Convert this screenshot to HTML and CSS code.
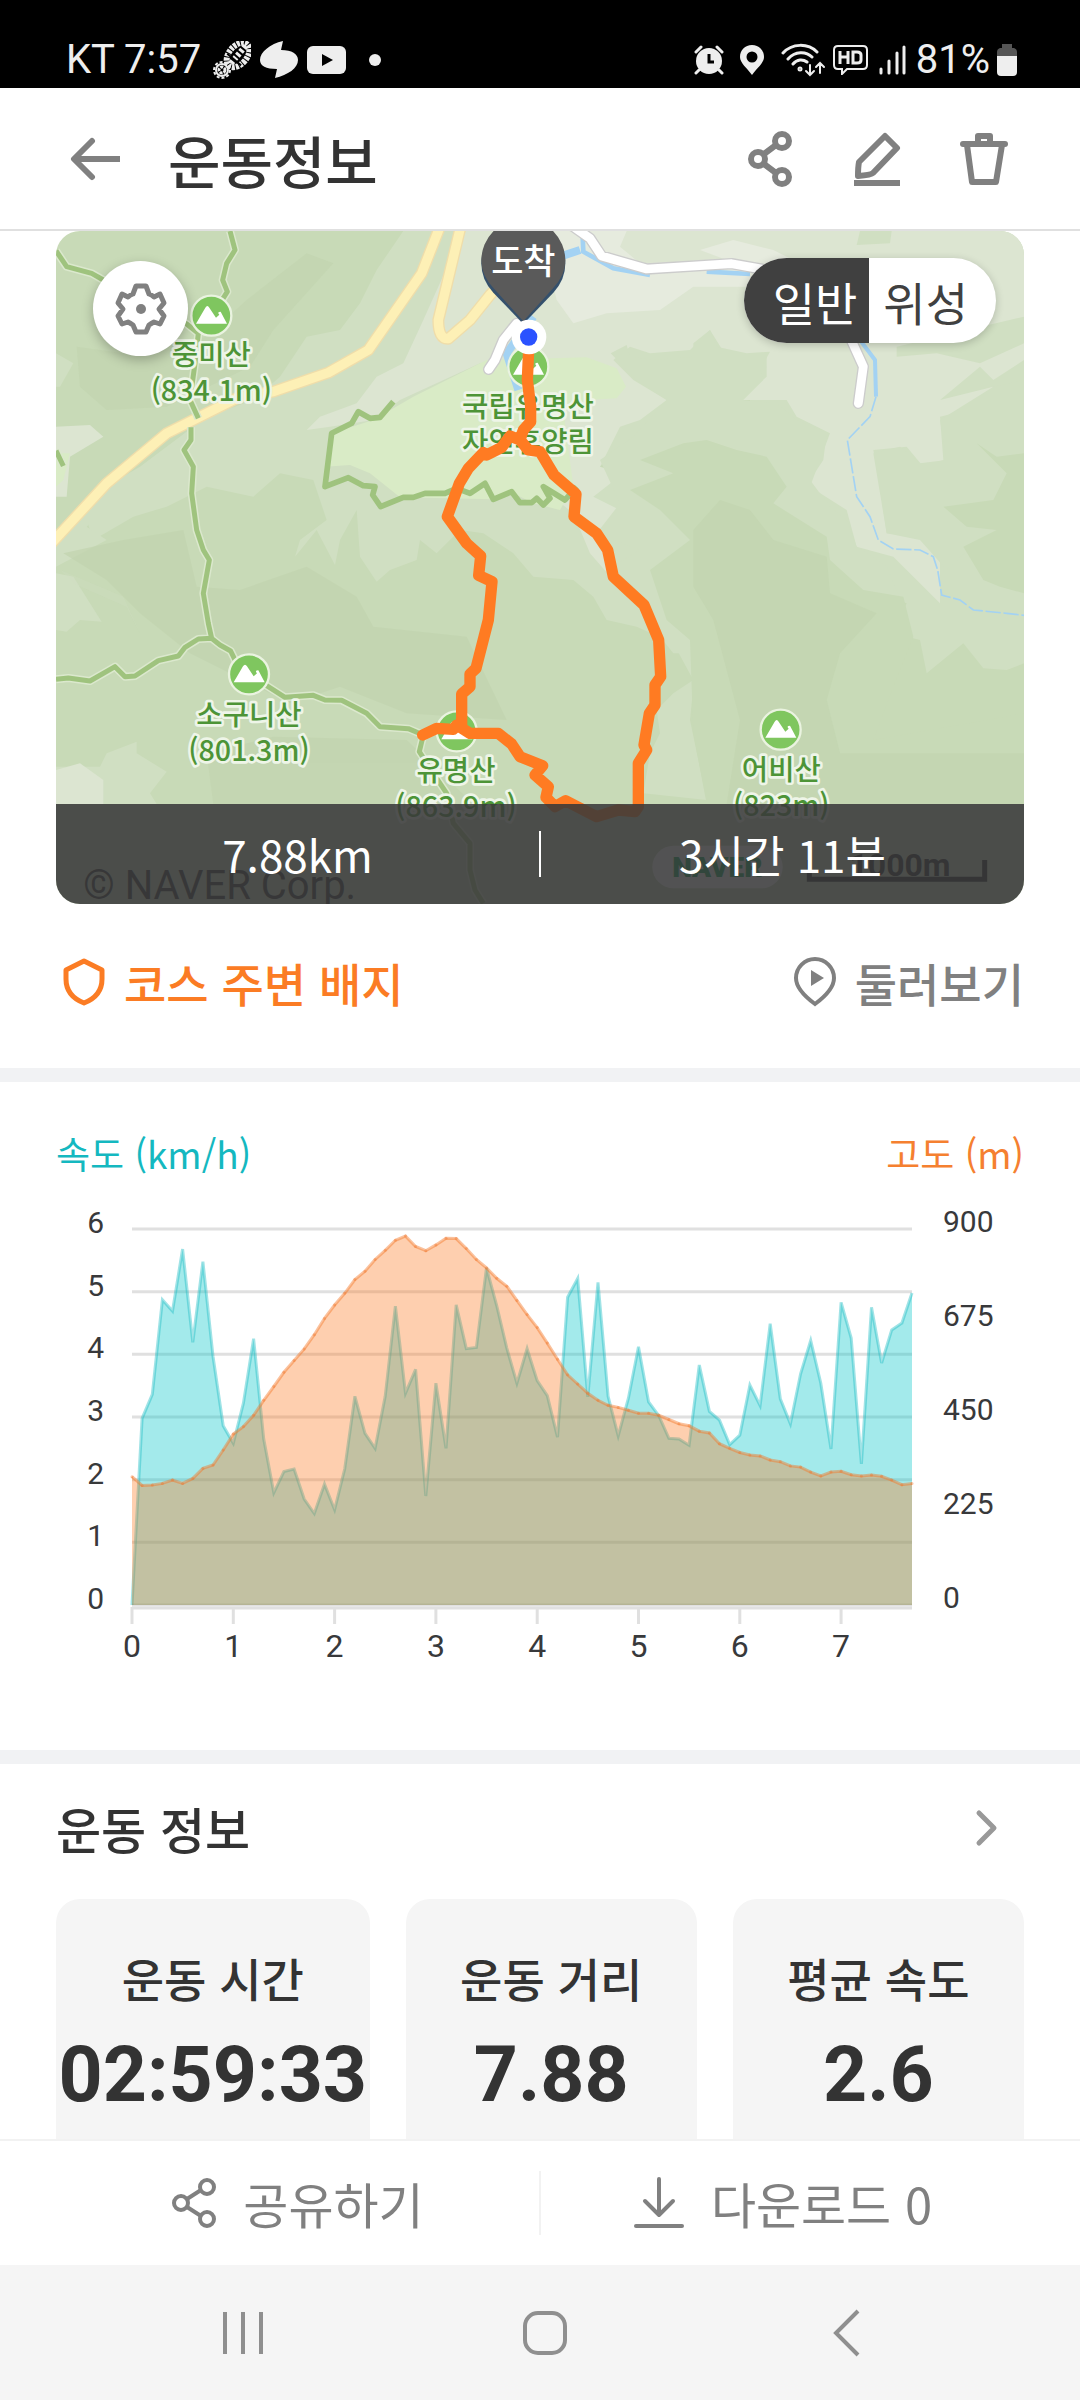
FILE: index.html
```html
<!doctype html>
<html lang="ko">
<head>
	<meta charset="UTF-8" />
	<meta name="viewport" content="width=device-width, initial-scale=1" />
	<title>운동정보</title>
	<link rel="stylesheet" href="styles.css">
</head>
<body>
<div class="app">
	<div class="status">
		<span>KT 7:57</span>
		<svg class="shoe" width="38" height="38" viewBox="0 0 38 38">
			<g transform="rotate(40 25 14)" fill="none" stroke="#eee">
				<ellipse cx="25" cy="14" rx="9" ry="14" stroke-width="6" stroke-dasharray="3 1"/>
				<path d="M25 2V26" stroke-width="6" stroke-dasharray="3 2"/>
				<path d="M16 20H34" stroke="#000" stroke-width="2"/>
			</g>
			<circle cx="9" cy="29" r="6" fill="none" stroke="#eee" stroke-width="2"/>
			<circle cx="9" cy="29" r="8" fill="none" stroke="#eee" stroke-width="2" stroke-dasharray="3 2"/>
			<circle cx="9" cy="29" r="3" fill="none" stroke="#eee" stroke-width="3" stroke-dasharray="3 1"/>
		</svg>
		<svg width="40" height="38" viewBox="0 0 40 38"><path d="M24 0 L22 9 C33 9 39 13 39 19 C39 27 29 34 16 37 L18 28 C7 28 1 25 1 19 C1 11 11 3 24 0Z" fill="#eee"/></svg>
		<svg width="40" height="30" viewBox="0 0 40 30"><rect x="0" y="1" width="39" height="28" rx="6" fill="#eee"/><path d="M15 9 26 15 15 21Z" fill="#000"/></svg>
		<i class="dot"></i>
		<div class="status-right">
			<svg width="40" height="30" viewBox="0 0 40 30">
				<circle cx="16" cy="16" r="13" fill="#eee"/>
				<path d="M3 7 8 2M29 7 24 2M6 25 3 28M26 25 29 28" stroke="#eee" stroke-width="3" stroke-linecap="round"/>
				<path d="M16 9V17H21" fill="none" stroke="#000" stroke-width="3"/>
			</svg>
			<svg width="36" height="30" viewBox="0 0 36 30"><path fill-rule="evenodd" d="M13 0C20 0 25 5 25 12C25 18 18 23 13 30C8 23 1 18 1 12C1 5 6 0 13 0ZM13 6.500a5.500 5.500 0 1 0 0 11a5.500 5.500 0 1 0 0-11Z" fill="#eee"/></svg>
			<svg width="46" height="34" viewBox="0 0 46 34" fill="none" stroke="#eee" stroke-width="3" stroke-linecap="round">
				<path d="M2 10C11 0 27 0 36 9M7 16C14 8 25 8 31 14M12 21C16 16 22 16 26 19"/>
				<circle cx="19" cy="26" r="1"/>
				<path d="M29 22V32M25 28 29 32 33 28M39 30V20M35 24 39 20 43 24" stroke-width="2"/>
			</svg>
			<svg width="39" height="30" viewBox="0 0 39 30"><path d="M5 1H30Q34 1 34 5V20Q34 24 30 24H14L9 29V24H5Q1 24 1 20V5Q1 1 5 1Z" fill="none" stroke="#eee" stroke-width="2"/><path d="M7 6V19M15 6V19M7 12H15M20 7V18H24Q28 18 28 15V10Q28 7 24 7Z" fill="none" stroke="#eee" stroke-width="3"/></svg>
			<svg width="32" height="30" viewBox="0 0 32 30"><path d="M3 24V28M11 16V28M19 8V28M26 2V28" stroke="#eee" stroke-width="3" stroke-linecap="round"/></svg>
			<span>81%</span>
			<svg width="22" height="32" viewBox="0 0 22 32"><path d="M6 0H16V4H18Q21 5 21 8V14H1V8Q1 5 4 4H6Z" fill="#555"/><path d="M1 12H21V28Q21 32 17 32H5Q1 32 1 28Z" fill="#eee"/></svg>
		</div>
	</div>

	<header class="header">
		<button class="icon-btn" aria-label="뒤로"><svg width="52" height="44" viewBox="0 0 52 44" fill="none" stroke="#808080" stroke-width="6" stroke-linecap="round" stroke-linejoin="round"><path d="M22 4 4 22 22 40"/><path d="M6 22H50" stroke-linecap="butt"/></svg></button>
		<h1>운동정보</h1>
		<div class="tools">
			<button class="icon-btn" aria-label="공유"><svg width="46" height="58" viewBox="0 0 46 58" fill="none" stroke="#808080" stroke-width="6"><circle cx="35" cy="11" r="7"/><circle cx="11" cy="29" r="7"/><circle cx="35" cy="47" r="7"/><path d="M17 24 29 15M17 34 29 43"/></svg></button>
			<button class="icon-btn" aria-label="편집"><svg width="48" height="56" viewBox="0 0 48 56" fill="none" stroke="#808080" stroke-width="6" stroke-linejoin="round"><path d="M32 5 44 17 20 42 Q18 44 5 45 Q5 36 6 31Z"/><path d="M1 52H47"/></svg></button>
			<button class="icon-btn" aria-label="삭제"><svg width="50" height="56" viewBox="0 0 50 56" fill="none" stroke="#808080" stroke-width="6" stroke-linejoin="round"><path d="M4 13H46" stroke-linecap="round"/><path d="M19 12V5H31V12M8 14 13 51H37L43 14"/></svg></button>
		</div>
	</header>

	<main class="content">
		<section class="map">
			<svg class="map-pic" viewBox="48 33 2904 2019">
				<rect x="48" y="33" width="2904" height="2019" fill="#c8dab7"/>
				<!-- 지형 -->
				<g fill="#d0dfc2">
					<path d="M1000 33 1090 33 1010 150 960 250 900 330 800 350 720 470 640 540 500 590 300 740 180 810 140 900 160 960 280 890 380 860 500 800 640 830 720 760 820 780 860 900 780 960 765 1010 830 930 885 1035 900 960 950 870 960 1010 1010 1085 1050 1050 1130 1020 1140 960 1190 1000 1260 930 1330 940 1420 1000 1480 1070 1600 1080 1660 1130 1700 1200 1790 1220 1900 1270 1960 1380 1900 1420 1850 1470 1860 1540 1830 1600 1810 1720 2000 1740 1950 1500 1980 1200 1850 1050 1900 880 1650 760 2700 33Z"/>
					<path d="M48 1060 100 1070 150 1150 185 1205 120 1200 80 1235 48 1230Z"/>
					<path d="M48 940 90 900 180 830 200 860 140 920 200 960 48 1040Z"/>
					<path d="M48 1640 180 1640 200 1600 290 1565 290 1600 380 1655 330 1720 350 1752 48 1752Z"/>
					<path d="M60 1050 250 1130 300 1240 260 1160 100 1090Z" opacity=".3"/>
					<path d="M48 400 100 430 60 500 48 500Z"/>
					<path d="M2100 400 2952 300 2952 1330 2900 1350 2830 1345 2770 1270 2660 1360 2640 1260 2560 1240 2600 1150 2470 1110 2360 1020 2300 920 2200 880Z"/>
				</g>
				<g fill="#dce5d1">
					<path d="M1270 33 2952 33 2952 420 2860 480 2820 440 2700 540 2860 500 2820 560 2700 590 2710 720 2650 740 2600 680 2500 690 2520 800 2540 940 2700 950 2700 1150 2560 1010 2450 980 2420 870 2310 800 2370 640 2270 590 2240 540 2100 540 2180 470 2180 400 2060 410 2010 330 1950 390 1830 400 1770 380 1720 420 1780 480 1880 540 1800 600 1740 620 1680 740 1750 760 1660 830 1740 870 1690 950 1720 1080 1650 1000 1600 880 1550 840 1480 700 1420 600 1320 430 1080 540 1000 600 870 620 800 630 840 590 950 550 1010 470 1090 430 1150 300Z"/>
					<path d="M48 620 150 615 190 650 90 710 80 830 48 830Z"/>
					<path d="M48 1650 120 1630 190 1680 190 1752 48 1752Z"/>
				</g>
				<g fill="#e6ebde">
					<path d="M1500 33 1760 33 1740 80 1800 130 2080 120 2160 150 2150 200 1960 200 1860 270 1700 280 1600 310 1550 240Z"/>
					<path d="M1980 90 2080 60 2200 90 2280 130 2170 150 2060 120Z"/>
				</g>
				<g fill="#d0dfc2">
					<path d="M1712 400 1760 375 1770 410 1840 420 1960 410 1960 370 2010 330 2030 380 2120 400 2190 395 2160 450 2170 480 2110 540 2210 550 2270 600 2360 640 2350 720 2310 780 2370 860 2420 900 2450 980 2540 1040 2600 1180 2560 1300 1900 1300 1700 1050 1800 990 1670 940 1740 850 1680 720 1780 650 1880 540 1790 480Z"/>
					<path d="M2450 75 2550 70 2555 33 2460 33Z"/>
					<path d="M2570 380 2952 290 2952 370 2820 430 2690 400 2570 410Z"/>
					<path d="M2500 700 2580 680 2640 730 2720 720 2700 600 2860 500 2952 480 2952 860 2900 880 2720 1050 2640 960 2540 940Z"/>
				</g>
				<g fill="#c8dab7">
					<path d="M1800 720 1930 670 2000 660 2090 690 2180 710 2240 800 2200 850 2360 950 2370 1020 2470 1110 2590 1130 2620 1250 2560 1400 2500 1560 2952 1480 2952 1752 2000 1752 1960 1540 1950 1260 1880 1200 1830 1050 1950 960 1860 870 1770 810 1900 760Z"/>
					<path d="M2810 670 2870 710 2952 700 2952 1120 2880 1100 2830 1080 2770 980 2870 930 2780 920 2710 860 2860 840 2900 760Z"/>
				</g>
				<g fill="#c2d4af" opacity=".7">
					<path d="M1960 930 2040 840 2130 870 2200 960 2360 1010 2370 1120 2510 1180 2400 1300 2360 1440 2400 1600 2952 1600 2952 1752 2060 1752 2100 1500 2020 1200 1960 1100Z"/>
					<path d="M110 380 250 400 500 350 620 240 800 100 880 130 700 330 630 440 380 560 200 570 120 500Z"/>
					<path d="M70 1000 250 960 430 930 470 1100 600 1110 800 1040 950 1130 1000 1220 1280 1250 1400 1500 1100 1480 900 1400 750 1450 450 1300 300 1180 200 1080Z"/>
					<path d="M500 1600 700 1550 1100 1560 1300 1752 520 1752Z"/>
				</g>
				<path d="M875 640 1000 600 1120 530 1340 420 1640 412 1730 445 1758 500 1730 535 1640 540 1570 570 1600 800 1560 870 1480 850 1420 820 1360 838 1080 832 990 760 930 735 855 740Z" fill="#d9ebc6"/>
				<path d="M48 700 90 700 70 780 48 800Z" fill="#d9ebc6"/>
				<!-- 물길 -->
				<g fill="none" stroke="#a3d2f3">
					<path d="M1480 290 1400 400 1435 510M1560 110 1620 90" stroke-width="24"/>
					<path d="M1628 50 1630 95 1720 145 1830 165M2000 155 2130 162" stroke-width="14"/>
					<path d="M2460 360 2505 420 2508 530" stroke-width="12"/>
					<path d="M2508 530 2490 590 2422 660 2450 830 2490 890 2515 960 2560 987 2640 990 2680 1010 2693 1050 2705 1125 2760 1140 2800 1170 2900 1180 2952 1186" stroke-width="5" stroke-dasharray="46 8"/>
				</g>
				<!-- 도로 -->
				<g fill="none" stroke-linejoin="round" stroke-linecap="round">
					<path d="M30 975 200 790 380 640 480 590 600 530 700 515 865 458 985 390 1145 160 1200 20M1262 20 1195 300Q1195 358 1225 356L1290 300 1350 225 1440 130" stroke="#efddaa" stroke-width="36"/>
					<path d="M30 975 200 790 380 640 480 590 600 530 700 515 865 458 985 390 1145 160 1200 20M1262 20 1195 300Q1195 358 1225 356L1290 300 1350 225 1440 130" stroke="#fdf0b6" stroke-width="28"/>
					<path d="M1430 310 1390 360 1365 420 1346 448M1600 20 1650 55 1685 108 1820 147 2075 131 2180 150 2320 210 2420 330 2470 440 2455 550" stroke="#ccc" stroke-width="34"/>
					<path d="M1430 310 1390 360 1365 420 1346 448M1600 20 1650 55 1685 108 1820 147 2075 131 2180 150 2320 210 2420 330 2470 440 2455 550" stroke="#fff" stroke-width="26"/>
				</g>
				<!-- 등산로 -->
				<g fill="none" stroke-linejoin="round">
					<path d="M48 92 80 140 155 160 190 180 440 312 475 340 465 430 450 540 475 595M453 622 453 660 432 690 460 740 455 820 470 930 490 990 508 1020 490 1120 505 1210 515 1255M570 33 585 90 560 130 548 180 562 215 540 250M48 692 70 738M48 1378 85 1374 150 1383 225 1340 255 1370 285 1368 355 1322 415 1308 435 1282 475 1257 515 1255 540 1275 572 1293 590 1330 627 1363 735 1432 820 1426 855 1440 905 1441 980 1480 1020 1520 1105 1526 1150 1545 1138 1595 1180 1660 1220 1720 1240 1810 1290 1870 1290 1950 1305 2010 1330 2050" stroke="#dbe8cd" stroke-width="24"/>
					<path d="M48 92 80 140 155 160 190 180 440 312 475 340 465 430 450 540 475 595M453 622 453 660 432 690 460 740 455 820 470 930 490 990 508 1020 490 1120 505 1210 515 1255M570 33 585 90 560 130 548 180 562 215 540 250M48 692 70 738M48 1378 85 1374 150 1383 225 1340 255 1370 285 1368 355 1322 415 1308 435 1282 475 1257 515 1255 540 1275 572 1293 590 1330 627 1363 735 1432 820 1426 855 1440 905 1441 980 1480 1020 1520 1105 1526 1150 1545 1138 1595 1180 1660 1220 1720 1240 1810 1290 1870 1290 1950 1305 2010 1330 2050" stroke="#9fc37e" stroke-width="15"/>
					<path d="M1060 545 1020 592 990 595 955 575 935 610 875 640 855 800 925 773 970 797 1005 800 998 825 1022 860 1090 832 1120 832 1155 820 1215 820 1250 805 1290 820 1335 790 1360 838 1415 815 1440 848 1475 848 1490 835 1510 855 1530 835 1510 800 1575 840 1610 800" stroke="#9fc37e" stroke-width="17"/>
				</g>
				<!-- 산 표시 -->
				<defs>
					<g id="peak">
						<circle r="60" fill="#7fc65f" stroke="#eaf3e0" stroke-width="7"/>
						<path d="M-46 24-18-24Q-12-34-6-24L14 6 24-3Q16-12 28-12L47 24Z" fill="#fff"/>
					</g>
				</defs>
				<use href="#peak" x="514" y="287"/>
				<use href="#peak" x="1465" y="440"/>
				<use href="#peak" x="627" y="1363"/>
				<use href="#peak" x="1250" y="1534"/>
				<use href="#peak" x="2222" y="1529"/>
				<g class="peak-name">
					<text x="514" y="436">중미산</text>
					<text x="514" y="543">(834.1m)</text>
					<text x="1464" y="590">국립유명산</text>
					<text x="1464" y="697">자연휴양림</text>
					<text x="627" y="1515">소구니산</text>
					<text x="627" y="1623">(801.3m)</text>
					<text x="1248" y="1684">유명산</text>
					<text x="1248" y="1792">(863.9m)</text>
					<text x="2224" y="1680">어비산</text>
					<text x="2224" y="1788">(823m)</text>
				</g>
				<text class="copyright" x="130" y="2038">© NAVER Corp.</text>
				<rect x="1837" y="1877" width="391" height="128" rx="64" fill="#fff"/>
				<text class="naver" x="2032" y="1970">NAVER</text>
				<text class="scale-text" x="2580" y="1968">1000m</text>
				<path d="M2308 1920V1978H2834V1920" fill="none" stroke="#222" stroke-width="15"/>
				<!-- 이동 경로 -->
				<path d="M1466 390 1462 480 1472 560 1472 605 1450 630 1440 660 1410 648 1385 682 1340 705 1330 698 1285 745 1258 790 1222 890 1280 970 1322 1008 1316 1066 1356 1085 1345 1200 1308 1345 1290 1362 1290 1400 1265 1422 1265 1515M1148 1545 1190 1525 1240 1528 1250 1515 1290 1540 1375 1540 1415 1572 1440 1610 1508 1637 1485 1665 1525 1700 1518 1732 1545 1760 1577 1742 1670 1790 1735 1770 1785 1775 1795 1760 1795 1630 1820 1590 1812 1575 1828 1480 1845 1455 1845 1395 1862 1370 1856 1260 1812 1155 1720 1070 1703 990 1670 940 1602 890 1608 822 1542 765 1500 695 1465 690 1440 660" fill="none" stroke="#ff7b22" stroke-width="34" stroke-linecap="round" stroke-linejoin="round"/>
				<!-- 도착 핀 -->
				<path d="M1450 312 1360 218Q1324 180 1324 130A126 126 0 0 1 1576 130Q1576 180 1540 218Z" fill="#34506c"/>
				<path d="M1450 304 1362 206Q1324 166 1324 122A126 126 0 0 1 1576 122Q1576 166 1538 206Z" fill="#5a5a5a"/>
				<text class="pin-text" x="1450" y="163">도착</text>
				<circle cx="1467" cy="351" r="52" fill="#fff"/>
				<circle cx="1466" cy="351" r="26" fill="#2b52ff"/>
			</svg>
			<button class="gear" aria-label="지도 설정"><svg width="52" height="54" viewBox="-26 -27 52 54"><path d="M-8-15 -5-23H5L8-15Q11-14 13-12L19-15 23-6 18 0 23 7 19 15 13 13Q11 14 8 16L5 23H-5L-8 16Q-11 14-13 13L-19 15-23 7-18 0-23-6-19-15-13-12Q-11-14-8-15Z" fill="none" stroke="#808080" stroke-width="5" stroke-linejoin="round"/><circle r="5" fill="#808080"/></svg></button>
			<div class="map-type">
				<button class="on" aria-pressed="true">일반</button>
				<button aria-pressed="false">위성</button>
			</div>
			<div class="summary">
				<span>7.88km</span>
				<span>3시간 11분</span>
			</div>
		</section>

		<section class="links">
			<a href="#" class="badge"><svg width="44" height="50" viewBox="0 0 44 50"><path d="M22 4 40 13V22Q40 39 22 46Q4 39 4 22V13Z" fill="none" stroke="#fb7c24" stroke-width="5" stroke-linejoin="round"/></svg>코스 주변 배지</a>
			<a href="#" class="look"><svg width="44" height="50" viewBox="0 0 44 50"><path d="M22 47Q3 33 3 21A19 19 0 0 1 41 21Q41 33 22 47Z" fill="none" stroke="#808080" stroke-width="4"/><path d="M18 13 31 21 18 29Z" fill="#808080"/></svg>둘러보기</a>
		</section>

		<section class="graph">
			<div class="legend"><span class="speed">속도 (km/h)</span><span class="height">고도 (m)</span></div>
			<svg id="chart" viewBox="0 0 968 470"></svg>
		</section>

		<section class="info">
			<a href="#" class="info-title"><h2>운동 정보</h2><svg width="24" height="38" viewBox="0 0 24 38"><path d="M4 4 19 19 4 34" fill="none" stroke="#999" stroke-width="5" stroke-linecap="round" stroke-linejoin="round"/></svg></a>
			<ul class="cards">
				<li><p>운동 시간</p><strong>02:59:33</strong></li>
				<li><p>운동 거리</p><strong>7.88</strong></li>
				<li><p>평균 속도</p><strong>2.6</strong></li>
			</ul>
		</section>
	</main>

	<div class="actions">
		<button><svg width="46" height="52" viewBox="0 0 46 52" fill="none" stroke="#808080" stroke-width="4"><circle cx="36" cy="10" r="7"/><circle cx="10" cy="26" r="7"/><circle cx="36" cy="42" r="7"/><path d="M16 22 30 13M16 30 30 39"/></svg>공유하기</button>
		<button><svg width="52" height="54" viewBox="0 0 52 54" fill="none" stroke="#808080" stroke-width="4" stroke-linecap="round" stroke-linejoin="round"><path d="M26 3V39M12 25 26 39 40 25"/><path d="M3 50H49"/></svg>다운로드 0</button>
	</div>

	<nav class="navbar">
		<button aria-label="최근 앱"><svg width="48" height="48" viewBox="0 0 48 48"><path d="M6 3V45M24 3V45M42 3V45" stroke="#8f8f8f" stroke-width="4"/></svg></button>
		<button aria-label="홈"><svg width="48" height="48" viewBox="0 0 48 48"><rect x="4" y="4" width="40" height="40" rx="13" fill="none" stroke="#8f8f8f" stroke-width="4"/></svg></button>
		<button aria-label="이전"><svg width="48" height="48" viewBox="0 0 48 48"><path d="M35 2 13 24 35 46" fill="none" stroke="#8f8f8f" stroke-width="4"/></svg></button>
	</nav>
</div>

<script>
	// 0.1km 마다 기록된 속도(km/h)
	let speed = [0, 2.98, 3.36, 4.87, 4.69, 5.68, 4.19, 5.48, 3.97, 2.86, 2.58, 3.22, 4.25, 2.65, 1.79, 2.13, 2.17, 1.69, 1.46, 1.93,
		1.52, 2.17, 3.33, 2.74, 2.5, 3.33, 4.77, 3.38, 3.76, 1.74, 3.54, 2.5, 4.79, 4.09, 4.11, 5.38, 4.78, 4.1, 3.54, 4.09,
		3.58, 3.34, 2.68, 4.91, 5.21, 3.32, 5.15, 3.33, 2.7, 3.3, 4.12, 3.24, 3.02, 2.66, 2.65, 2.55, 3.83, 3.09, 2.95, 2.56,
		2.71, 3.51, 3.18, 4.49, 3.29, 2.89, 3.69, 4.22, 3.54, 2.49, 4.83, 4.26, 2.25, 4.75, 3.86, 4.39, 4.5, 4.98];
	// 고도(m)
	let height = [307, 286, 287, 291, 299, 291, 303, 327, 335, 371, 409, 427, 454, 490, 523, 557, 585, 613, 647, 686,
		718, 746, 779, 799, 827, 849, 873, 883, 858, 848, 862, 878, 877, 853, 827, 807, 782, 763, 729, 695,
		664, 627, 588, 551, 529, 507, 490, 478, 473, 466, 459, 459, 454, 444, 434, 429, 416, 412, 386, 375,
		365, 359, 357, 347, 343, 333, 330, 318, 309, 318, 320, 312, 309, 311, 308, 299, 288, 291];

	let left = 76, right = 856, top0 = 29, bottom = 405;
	let step = (right - left) / (speed.length - 1);

	// 값 배열을 좌표로 바꾼다
	function points(list, max){
		return list.map((v, i) => [(left + i * step).toFixed(1), (bottom - v / max * (bottom - top0)).toFixed(1)]);
	}

	let html = '';
	for( let i = 0; i <= 6; i++ ){
		let y = bottom - i * (bottom - top0) / 6;
		html += `<path class="grid" d="M${left} ${y}H${right}"/>`;
		html += `<text class="y" x="48" y="${y + 4}" text-anchor="end">${i}</text>`;
	}
	for( let i = 0; i <= 4; i++ ){
		html += `<text class="y" x="887" y="${bottom + 3 - i * 94}">${i * 225}</text>`;
	}
	html += `<path class="grid" d="M${left} 408H${right}"/>`;
	for( let i = 0; i <= 7; i++ ){
		let x = left + i * step * 10;
		html += `<path class="grid" d="M${x} 407V424"/>`;
		html += `<text class="x" x="${x}" y="457">${i}</text>`;
	}

	[['speed', points(speed, 6)], ['height', points(height, 900)]].forEach(([name, list]) => {
		let line = list.map(p => p.join(' ')).join('L');
		html += `<path class="${name}-area" d="M${line}V${bottom}H${left}Z"/>`;
		html += `<path class="${name}-line" d="M${line}"/>`;
		if(name === 'height'){
			html += list.map(p => `<circle class="point" cx="${p[0]}" cy="${p[1]}" r="1.5"/>`).join('');
		}
	});

	document.querySelector('#chart').innerHTML = html;
</script>
</body>
</html>
```
FILE: styles.css
```css
*{
	box-sizing: border-box;
}
body,ul,h1,h2,p{
	margin: 0;
	padding: 0;
}
body{
	background: #fff;
	color: #333;
	font-family: "Noto Sans CJK KR", "Noto Sans", sans-serif;
}
button{
	padding: 0;
	border: 0;
	background: none;
	font: inherit;
	color: inherit;
}
a{
	color: inherit;
	text-decoration: none;
}
svg{
	display: block;
	flex: none;
}
.app{
	display: flex;
	flex-direction: column;
	height: 100vh;
}

/* 상태바 */
.status{
	display: flex;
	align-items: center;
	gap: 8px;
	flex: none;
	padding: 32px 62px 0 66px;
	height: 88px;
	background: #000;
	color: #eee;
	font-family: Roboto, sans-serif;
	font-size: 40px;
	line-height: 56px;
}
.shoe{
	margin-left: 4px;
}
.dot{
	width: 12px;
	height: 12px;
	margin-left: 14px;
	border-radius: 50%;
	background: #eee;
}
.status-right{
	display: flex;
	align-items: center;
	gap: 6px;
	margin-left: auto;
}

/* 헤더 */
.header{
	display: flex;
	align-items: center;
	flex: none;
	padding: 32px 56px;
	border-bottom: 2px solid #e0e0e0;
}
.header h1{
	margin-left: 32px;
	font-size: 57px;
	font-weight: 500;
	line-height: 76px;
}
.icon-btn{
	display: flex;
	align-items: center;
	justify-content: center;
	width: 80px;
	height: 77px;
}
.tools{
	display: flex;
	gap: 27px;
	margin-left: auto;
}

.content{
	flex: 1;
	min-height: 0;
	overflow: hidden;
}

/* 지도 */
.map{
	position: relative;
	margin: 0 56px;
	border-radius: 24px;
	overflow: hidden;
}
.map-pic{
	width: 100%;
}
.peak-name{
	font-size: 86px;
	font-weight: 500;
	text-anchor: middle;
	fill: #4d9437;
	stroke: #eef5e8;
	stroke-width: 16px;
	stroke-linejoin: round;
	paint-order: stroke;
}
.copyright{
	font-family: Roboto, sans-serif;
	font-size: 120px;
	fill: #333;
}
.naver{
	font-family: Roboto, sans-serif;
	font-size: 84px;
	font-weight: 900;
	text-anchor: middle;
	fill: #03a050;
}
.scale-text{
	font-family: Roboto, sans-serif;
	font-size: 96px;
	font-weight: 700;
	text-anchor: middle;
	fill: #222;
}
.pin-text{
	font-size: 105px;
	font-weight: 500;
	text-anchor: middle;
	fill: #fff;
}
.gear{
	position: absolute;
	left: 37px;
	top: 30px;
	display: flex;
	align-items: center;
	justify-content: center;
	width: 95px;
	height: 95px;
	border-radius: 50%;
	background: #fff;
	box-shadow: 0 4px 12px rgba(0,0,0,.25);
}
.map-type{
	position: absolute;
	right: 28px;
	top: 27px;
	display: flex;
	height: 85px;
	border-radius: 43px;
	background: #fff;
	box-shadow: 0 2px 8px rgba(0,0,0,.2);
	overflow: hidden;
}
.map-type button{
	padding: 0 28px 0 14px;
	color: #404040;
	font-size: 46px;
	line-height: 80px;
}
.map-type .on{
	padding: 0 12px 0 29px;
	background: #404040;
	color: #fff;
}
.summary{
	position: absolute;
	left: 0;
	right: 0;
	bottom: 0;
	display: flex;
	align-items: center;
	height: 100px;
	background: rgba(56,56,57,.87);
	color: #fff;
	font-size: 44px;
	line-height: 46px;
}
.summary span{
	flex: 1;
	text-align: center;
}
.summary span + span{
	border-left: 2px solid #fff;
}

.links{
	display: flex;
	align-items: center;
	justify-content: space-between;
	padding: 44px 56px 52px 62px;
	border-bottom: 14px solid #f1f2f4;
	font-size: 46px;
	font-weight: 500;
	line-height: 68px;
}
.links a{
	display: flex;
	align-items: center;
	gap: 18px;
}
.badge{
	color: #fb7c24;
}
.look{
	color: #808080;
}

/* 그래프 */
.graph{
	padding: 24px 56px 80px;
	border-bottom: 14px solid #f1f2f4;
}
.legend{
	display: flex;
	justify-content: space-between;
	font-size: 37px;
	line-height: 94px;
}
.speed{
	color: #14b8c0;
}
.height{
	color: #f58030;
}
#chart{
	width: 100%;
	font-family: Roboto, sans-serif;
	fill: #38393b;
}
.y{
	font-size: 30px;
}
.x{
	font-size: 32px;
	text-anchor: middle;
}
.grid{
	fill: none;
	stroke: #e0e0e0;
	stroke-width: 3px;
}
.speed-area{
	fill: rgba(0,197,199,.36);
}
.height-area{
	fill: rgba(252,118,26,.35);
}
.speed-line{
	fill: none;
	stroke: rgba(20,184,192,.4);
	stroke-width: 3px;
}
.height-line{
	fill: none;
	stroke: rgba(245,120,40,.45);
	stroke-width: 3px;
}
.point{
	fill: rgba(240,115,40,.4);
}

/* 운동 정보 */
.info{
	padding: 0 56px;
}
.info-title{
	display: flex;
	align-items: center;
	justify-content: space-between;
	padding: 28px 25px 35px 0;
}
.info-title h2{
	font-size: 49px;
	font-weight: 500;
	line-height: 72px;
}
.cards{
	display: grid;
	grid-template-columns: 14fr 13fr 13fr;
	gap: 36px;
	list-style: none;
}
.cards li{
	padding: 44px 0 48px;
	border-radius: 24px;
	background: #f5f5f5;
	text-align: center;
}
.cards p{
	font-size: 46px;
	font-weight: 500;
	line-height: 68px;
}
.cards strong{
	display: block;
	margin-top: 16px;
	font-family: Roboto, sans-serif;
	font-size: 77px;
	line-height: 96px;
}

/* 하단 */
.actions{
	display: flex;
	flex: none;
	padding: 30px 56px;
	border-top: 2px solid #f2f2f2;
	color: #808080;
	font-size: 49px;
	line-height: 64px;
}
.actions button{
	display: flex;
	flex: 1;
	align-items: center;
	justify-content: center;
	gap: 26px;
}
.actions button + button{
	border-left: 2px solid #f2f2f2;
}
.navbar{
	display: grid;
	grid-template-columns: 1fr 1fr 1fr;
	flex: none;
	padding: 44px 82px 43px 92px;
	background: #f5f5f5;
}
.navbar button{
	display: flex;
	justify-content: center;
}
```
